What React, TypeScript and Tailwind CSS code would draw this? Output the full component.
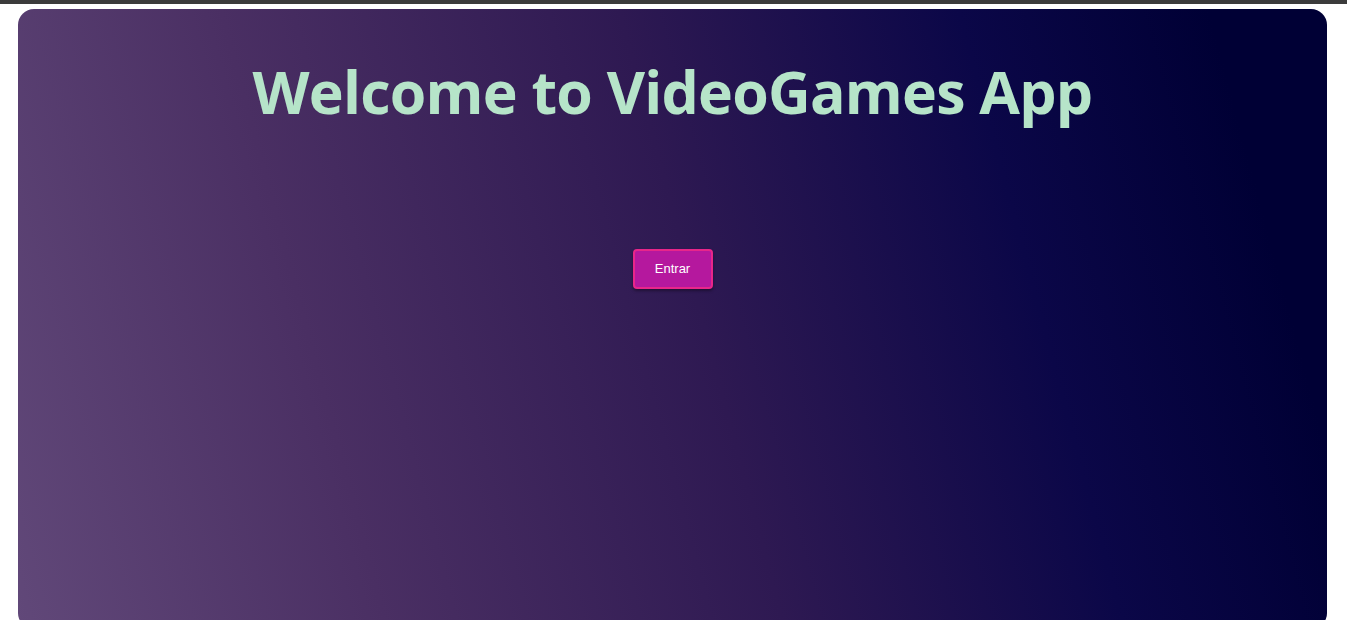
import React from 'react';

export default function App() {
  return (
    <div className="min-h-screen bg-white font-['Open_Sans',sans-serif]">
      {/* top strip */}
      <div className="h-1 bg-[#3b3b3b]" />

      <main className="ml-[18px] mr-[20px] mt-[5px] h-[620px] rounded-2xl bg-[linear-gradient(75deg,#614879_0%,#4a2f63_25%,#2e1952_52%,#0b0748_75%,#000035_92%)] flex flex-col items-center">
        <h1 className="mt-[42px] text-[59px] font-bold leading-[80px] text-[#b6e4c9] tracking-[-0.75px]">
          Welcome to VideoGames App
        </h1>

        <button className="mt-[118px] w-[80px] h-[40px] rounded-[4px] border-2 border-[#e8268a] bg-[#b5189e] text-[13px] text-white font-['Liberation_Sans',sans-serif] shadow-[0_2px_3px_rgba(0,0,0,0.35)]">
          Entrar
        </button>
      </main>
    </div>
  );
}
